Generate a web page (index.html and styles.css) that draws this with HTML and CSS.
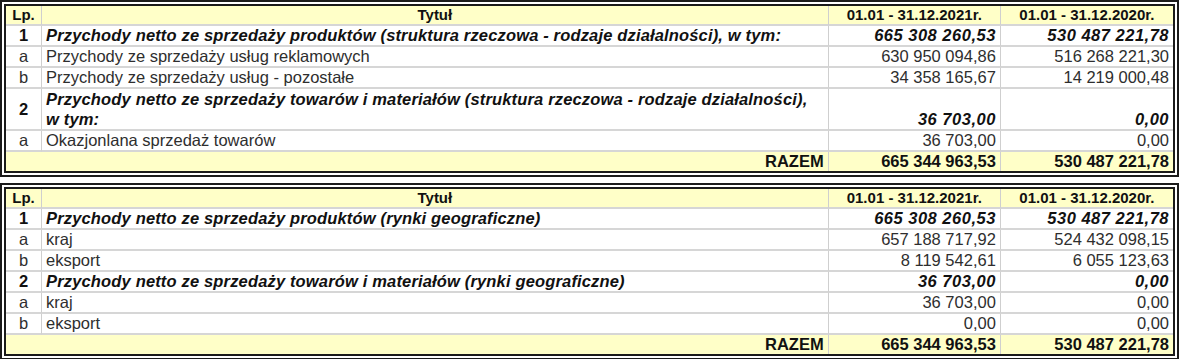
FILE: index.html
```html
<!DOCTYPE html>
<html lang="pl">
<head>
<meta charset="utf-8">
<title>Przychody</title>
<link rel="stylesheet" href="styles.css">
</head>
<body>
<div class="page">
<table class="fin">
  <colgroup><col class="c-lp"><col class="c-title"><col class="c-num"><col class="c-num"></colgroup>
  <thead>
    <tr class="head"><th>Lp.</th><th>Tytuł</th><th>01.01 - 31.12.2021r.</th><th>01.01 - 31.12.2020r.</th></tr>
  </thead>
  <tbody>
    <tr class="main"><td class="lp">1</td><td class="t">Przychody netto ze sprzedaży produktów (struktura rzeczowa - rodzaje działalności), w tym:</td><td class="n">665 308 260,53</td><td class="n">530 487 221,78</td></tr>
    <tr><td class="lp">a</td><td class="t">Przychody ze sprzedaży usług reklamowych</td><td class="n">630 950 094,86</td><td class="n">516 268 221,30</td></tr>
    <tr><td class="lp">b</td><td class="t">Przychody ze sprzedaży usług - pozostałe</td><td class="n">34 358 165,67</td><td class="n">14 219 000,48</td></tr>
    <tr class="main tall"><td class="lp">2</td><td class="t">Przychody netto ze sprzedaży towarów i materiałów (struktura rzeczowa - rodzaje działalności), <span class="nw">w tym:</span></td><td class="n">36 703,00</td><td class="n">0,00</td></tr>
    <tr><td class="lp">a</td><td class="t">Okazjonlana sprzedaż towarów</td><td class="n">36 703,00</td><td class="n">0,00</td></tr>
    <tr class="sum"><td class="razem" colspan="2">RAZEM</td><td class="n">665 344 963,53</td><td class="n">530 487 221,78</td></tr>
  </tbody>
</table>
<table class="fin">
  <colgroup><col class="c-lp"><col class="c-title"><col class="c-num"><col class="c-num"></colgroup>
  <thead>
    <tr class="head"><th>Lp.</th><th>Tytuł</th><th>01.01 - 31.12.2021r.</th><th>01.01 - 31.12.2020r.</th></tr>
  </thead>
  <tbody>
    <tr class="main"><td class="lp">1</td><td class="t">Przychody netto ze sprzedaży produktów (rynki geograficzne)</td><td class="n">665 308 260,53</td><td class="n">530 487 221,78</td></tr>
    <tr><td class="lp">a</td><td class="t">kraj</td><td class="n">657 188 717,92</td><td class="n">524 432 098,15</td></tr>
    <tr><td class="lp">b</td><td class="t">eksport</td><td class="n">8 119 542,61</td><td class="n">6 055 123,63</td></tr>
    <tr class="main"><td class="lp">2</td><td class="t">Przychody netto ze sprzedaży towarów i materiałów (rynki geograficzne)</td><td class="n">36 703,00</td><td class="n">0,00</td></tr>
    <tr><td class="lp">a</td><td class="t">kraj</td><td class="n">36 703,00</td><td class="n">0,00</td></tr>
    <tr><td class="lp">b</td><td class="t">eksport</td><td class="n">0,00</td><td class="n">0,00</td></tr>
    <tr class="sum"><td class="razem" colspan="2">RAZEM</td><td class="n">665 344 963,53</td><td class="n">530 487 221,78</td></tr>
  </tbody>
</table>
</div>
</body>
</html>
```

FILE: styles.css
```css
html, body {
  margin: 0;
  padding: 0;
  background: #ffffff;
}
.page {
  display: flex;
  flex-direction: column;
  gap: 6px;
  font-family: "Liberation Sans", Arial, sans-serif;
  color: #2e2e2e;
}
.fin {
  width: 1179px;
  table-layout: fixed;
  border-collapse: separate;
  border-spacing: 0;
  border: 6px double #1a1a1a;
  box-sizing: border-box;
}
.c-lp { width: 36px; }
.c-title { width: 786px; }
.c-num { width: 172px; }
.fin th, .fin td {
  border-right: 1px solid #cfcfcf;
  border-bottom: 2px solid #d6d6d6;
  padding: 0 4px;
  white-space: normal;
  overflow: hidden;
}
.fin th:last-child, .fin td:last-child { border-right: none; }
.fin tr:last-child td { border-bottom: none; }
.head th {
  background: #ffffc8;
  font-size: 15px;
  font-weight: bold;
  color: #111;
  height: 18px;
  line-height: 18px;
  text-align: center;
}
.fin td {
  font-size: 16.5px;
  height: 19px;
  line-height: 19px;
}
.lp { text-align: center; }
.t { text-align: left; }
.n { text-align: right; padding-right: 3px; }
.nw { white-space: nowrap; }
.main td {
  font-weight: bold;
  font-style: italic;
  color: #111;
  letter-spacing: 0.16px;
}
.main td.n { letter-spacing: 0.5px; padding-right: 4px; }
.main td.lp { font-style: normal; letter-spacing: 0; }
.tall td { height: 40px; vertical-align: bottom; }
.tall td.lp { vertical-align: middle; }
.tall td.t { line-height: 20px; }
.sum td {
  background: #ffffc8;
  font-weight: bold;
  color: #111;
}
.razem { text-align: right; padding-right: 6px; }
```
